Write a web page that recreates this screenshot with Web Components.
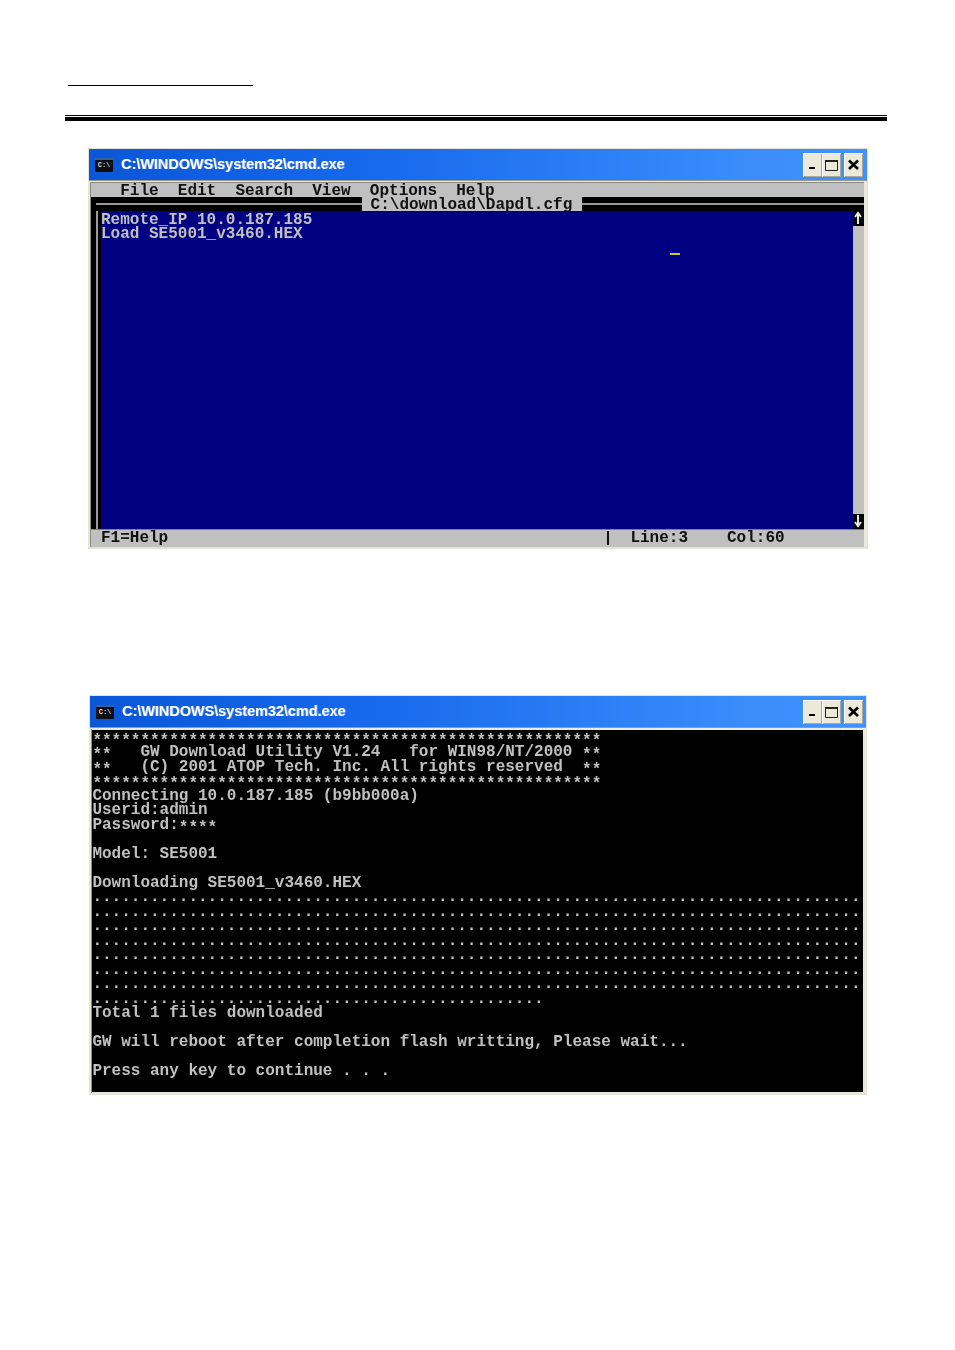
<!DOCTYPE html>
<html lang="en">
<head>
<meta charset="utf-8">
<title>GW Download Utility</title>
<style>
html,body{margin:0;padding:0;background:#fff}
body{width:955px;height:1350px;overflow:hidden;font-family:"Liberation Mono",monospace}
</style>
</head>
<body>
<doc-header></doc-header>
<xp-window style="--left:88px;--top:27px;--h:401px;--w:780px;--pr:4px" caption="C:\WINDOWS\system32\cmd.exe"><edit-screen></edit-screen></xp-window>
<xp-window style="--left:89px;--top:146px;--h:400px;--w:778px;--pr:3px" caption="C:\WINDOWS\system32\cmd.exe"><console-screen></console-screen></xp-window>
<script>
class DocHeader extends HTMLElement{
  constructor(){super();this.attachShadow({mode:'open'}).innerHTML=`<style>
  :host{display:block;padding:85px 0 0 65px}
  .short{width:185px;height:1px;background:#000;margin-left:3px}
  .rule{width:822px;margin-top:29px;border-top:1px solid #000;padding-top:1px}
  .rule div{height:4px;background:#000}
  </style><div class="short"></div><div class="rule"><div></div></div>`;}
}
class CaptionButtons extends HTMLElement{
  constructor(){super();this.attachShadow({mode:'open'}).innerHTML=`<style>
  :host{display:flex;align-items:center}
  .b{width:19px;height:24px;background:#ece9d8;box-shadow:inset 1px 1px 0 #fff,inset -1px -1px 0 #aca899;display:flex;align-items:center;justify-content:center}
  .x{margin-left:3px}
  svg{display:block}
  </style>
  <div class="b"><svg width="13" height="13" viewBox="0 0 13 13"><rect x="3" y="9" width="6" height="2" fill="#000"/></svg></div>
  <div class="b"><svg width="15" height="14" viewBox="0 0 15 14"><path d="M1.5 2.5h12v10h-12z" fill="none" stroke="#222"/><rect x="1" y="2" width="13" height="2" fill="#222"/></svg></div>
  <div class="b x"><svg width="13" height="13" viewBox="0 0 13 13"><path d="M2 2.5l9 8.500M11 2.500l-9 8.500" stroke="#000" stroke-width="2.600"/></svg></div>`;}
}
class XpWindow extends HTMLElement{
  constructor(){super();this.attachShadow({mode:'open'}).innerHTML=`<style>
  :host{display:block;margin:var(--top) 0 0 var(--left);width:var(--w);height:var(--h);box-sizing:border-box;background:#ece9d8;border:1px solid #e4e2d6;border-bottom-width:2px;display:flex;flex-direction:column}
  .bar{height:31px;flex:none;background:linear-gradient(90deg,#0a57d8 0,#1668ec 35%,#3a8dfb 85%,#3f93ff 100%);display:flex;align-items:center;padding:0 var(--pr) 0 6px;border-bottom:1px solid #9a9a90}
  .ico{width:18px;height:14px;margin-right:8px;background:#0d0d14;border-top:2px solid #3a5f9a;box-sizing:border-box;color:#ddd;font:bold 7px/11px "Liberation Mono",monospace;text-align:center;overflow:hidden;border-radius:1px}
  .t{font:bold 14.500px/18px "Liberation Sans",sans-serif;color:#fff;letter-spacing:-.05px;flex:1;white-space:nowrap;filter:blur(.3px);text-shadow:1px 0 0 rgba(255,255,255,.35);padding-bottom:2px}
  .client{flex:1;min-height:0;margin:1px 3px 0 1px;border-left:1px solid #8a8a82;display:flex;flex-direction:column}
  </style><div class="bar"><div class="ico">C:\\</div><div class="t"></div><caption-buttons></caption-buttons></div><div class="client"><slot></slot></div>`;}
  connectedCallback(){this.shadowRoot.querySelector('.t').textContent=this.getAttribute('caption');}
}
const ARROW=d=>`<svg width="10" height="14" viewBox="0 0 10 14"><path d="${d}" fill="none" stroke="#e8e8e8" stroke-width="2"/></svg>`;
class EditScreen extends HTMLElement{
  constructor(){super();this.attachShadow({mode:'open'}).innerHTML=`<style>
  :host{display:grid;flex:1;background:#c0c0c0;color:#101010;font:bold 16px/14.500px "Liberation Mono",monospace;grid-template-rows:15px 14px 318px 16px;grid-template-columns:10px 752px 11px;position:relative;filter:blur(.3px);white-space:pre}
  .menu{grid-column:1/4;border-top:1px solid #8a8a82;box-sizing:border-box;padding:1px 0 0 .4px}
  .titlerow{grid-column:1/4;display:flex;align-items:stretch}
  .dbl{background:#000;position:relative}
  .dbl::after{content:"";position:absolute;left:0;right:0;top:6px;height:2px;background:#9a9a9a}
  .dl{width:271px}
  .dl::after{left:5px}
  .name{padding:1px 9.600px 0 8.600px;line-height:14px;height:13px;overflow:visible}
  .dr{flex:1}
  .left{background:#000;position:relative}
  .left::after{content:"";position:absolute;left:5px;top:0;bottom:0;width:2px;background:#9a9a9a}
  .blue{background:#000080;color:#c0c0c0;position:relative;padding-top:1.500px}
  .cursor{position:absolute;left:569px;top:42px;width:10px;height:2px;background:#c8c840}
  .sb{background:#c0c0c0;display:flex;flex-direction:column;justify-content:space-between}
  .arr{background:#000;height:15px}
  .arr svg{display:block}
  .status{grid-column:1/4;display:flex;padding:.5px 0 0 10px;border-top:1px solid #7a7ab0;box-sizing:border-box}
  .f1{width:506px}
  .st{border-left:2px solid #111;padding-left:21.400px;width:96.600px}
  </style>
  <div class="menu">   File  Edit  Search  View  Options  Help</div>
  <div class="titlerow"><div class="dbl dl"></div><div class="name">C:\\download\\Dapdl.cfg</div><div class="dbl dr"></div></div>
  <div class="left"></div>
  <div class="blue">Remote_IP 10.0.187.185
Load SE5001_v3460.HEX<div class="cursor"></div></div>
  <div class="sb"><div class="arr">${ARROW('M5 13V3M2 6l3-4 3 4')}</div><div class="arr">${ARROW('M5 1v10M2 8l3 4 3-4')}</div></div>
  <div class="status"><div class="f1">F1=Help</div><div class="st">Line:3</div><div>Col:60</div></div>`;}
}
class ConsoleScreen extends HTMLElement{
  constructor(){super();const st=n=>`<span class="s">${'*'.repeat(n)}</span>`,s=st(53),d='.'.repeat(80);
  const text=[s,st(2)+'   GW Download Utility V1.24   for WIN98/NT/2000 '+st(2),st(2)+'   (C) 2001 ATOP Tech. Inc. All rights reserved  '+st(2),s,
  'Connecting 10.0.187.185 (b9bb000a)','Userid:admin','Password:'+st(4),'','Model: SE5001','','Downloading SE5001_v3460.HEX',
  d,d,d,d,d,d,d,'.'.repeat(47),'Total 1 files downloaded','','GW will reboot after completion flash writting, Please wait...','','Press any key to continue . . .'].join('\n');
  this.attachShadow({mode:'open'}).innerHTML=`<style>
  :host{display:block;flex:1;background:#000;color:#c0c0c0;font:bold 16px/14.500px "Liberation Mono",monospace;white-space:pre;filter:blur(.3px);margin:1px 0 1px 0;padding:.7px 0 0 .4px;overflow:hidden}
  .s{vertical-align:-3px;line-height:0}
  </style>`+text;}
}
customElements.define('doc-header',DocHeader);
customElements.define('caption-buttons',CaptionButtons);
customElements.define('xp-window',XpWindow);
customElements.define('edit-screen',EditScreen);
customElements.define('console-screen',ConsoleScreen);
</script>
</body>
</html>
